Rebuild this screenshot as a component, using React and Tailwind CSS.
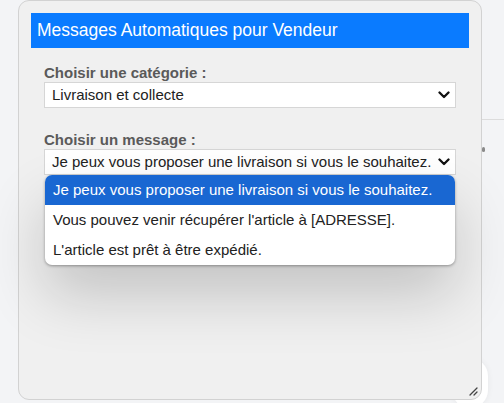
import React from "react";

function Chevron() {
  return (
    <svg width="12" height="8" viewBox="0 0 12 8" className="shrink-0">
      <path d="M1.5 1.5 L6 6 L10.5 1.5" fill="none" stroke="#111" strokeWidth="2.3" strokeLinecap="round" strokeLinejoin="round" />
    </svg>
  );
}

function SelectBox({ value }) {
  return (
    <div className="h-[26px] bg-white border border-[#d6d6d6] flex items-center justify-between pl-[7px] pr-[5px] text-[15px] text-[#222]">
      <span className="whitespace-nowrap">{value}</span>
      <Chevron />
    </div>
  );
}

export default function App() {
  const options = [
    "Je peux vous proposer une livraison si vous le souhaitez.",
    "Vous pouvez venir récupérer l'article à [ADRESSE].",
    "L'article est prêt à être expédié.",
  ];
  return (
    <div
      className="w-[504px] h-[403px] bg-[#f3f4f6] relative overflow-hidden"
      style={{ fontFamily: '"Liberation Sans", Arial, sans-serif' }}
    >
      <div className="absolute left-[481px] top-[119px] w-[23px] h-px bg-[#dcdcdc]" />
      <div className="absolute left-[482px] top-[147px] w-[3px] h-[5px] bg-[#8a8a8a] rounded-full" />
      <div className="absolute left-[452px] top-[358px] w-[36px] h-[50px] rounded-full bg-white shadow-[0_0_6px_rgba(0,0,0,0.06)]" />
      <div className="relative ml-[18px] w-[464px] h-[400px] rounded-[11px] border border-[#d2d2d2] bg-[#f0f0f0] pt-[12px] px-[12px]">
        <div className="h-[35px] bg-[#0a7bff] text-white text-[17.5px] pl-[6px] flex items-center">
          Messages Automatiques pour Vendeur
        </div>
        <div className="px-[13px] pt-[16px] flex flex-col">
          <div className="text-[15px] font-bold text-[#5a5a5a] leading-[18px]">Choisir une catégorie :</div>
          <SelectBox value="Livraison et collecte" />
          <div className="text-[15px] font-bold text-[#5a5a5a] leading-[18px] mt-[23px]">Choisir un message :</div>
          <div className="relative">
            <SelectBox value={options[0]} />
            <div className="absolute left-[1px] right-[1px] top-[26px] bg-white rounded-[7px] overflow-hidden shadow-[0_1px_3px_rgba(0,0,0,0.35),0_30px_60px_rgba(0,0,0,0.19)] text-[15px]">
              {options.map((o, i) => (
                <div
                  key={i}
                  className={
                    "h-[30px] flex items-center pl-[8px] whitespace-nowrap " +
                    (i === 0 ? "bg-[#1967d2] text-white" : "text-[#222]")
                  }
                >
                  {o}
                </div>
              ))}
            </div>
          </div>
        </div>
        <svg className="absolute right-[3px] bottom-[3px]" width="10" height="10" viewBox="0 0 10 10">
          <path d="M9 2 L2 9 M9 6 L6 9" stroke="#444" strokeWidth="1.3" strokeLinecap="round" />
        </svg>
      </div>
    </div>
  );
}
